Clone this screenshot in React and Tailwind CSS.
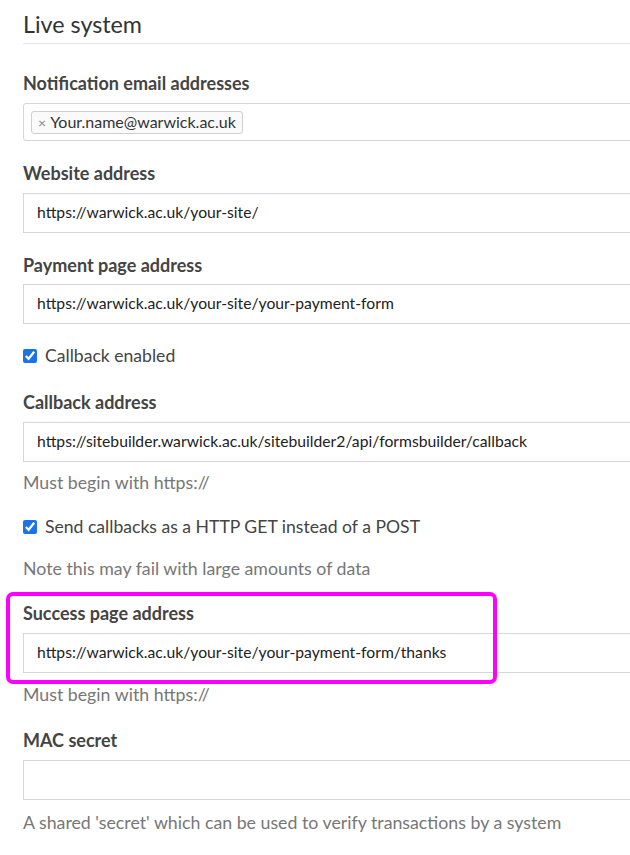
import React from 'react'

const Label = ({ children, className = '' }) => (
  <div className={`text-[18px] leading-[24px] font-bold text-[#444] ${className}`}>{children}</div>
)

const TextBox = ({ value, className = '' }) => (
  <div className={`h-[40px] w-[760px] border border-[#d6d6d6] bg-white flex items-center pl-[13px] text-[15.7px] text-[#222] ${className}`}>
    {value}
  </div>
)

const Help = ({ children, className = '' }) => (
  <div className={`text-[17.75px] leading-[24px] text-[#777] ${className}`}>{children}</div>
)

const Check = ({ children, className = '' }) => (
  <label className={`flex items-center h-[24px] text-[17.6px] text-[#444] ${className}`}>
    <input type="checkbox" checked readOnly className="w-[14px] h-[14px] m-0 mr-[8px] accent-[#1a73e8]" />
    {children}
  </label>
)

export default function App() {
  return (
    <div className="relative w-[630px] h-[855px] overflow-hidden bg-white font-['Lato','Liberation_Sans',sans-serif]">
      <div className="pl-[23px] w-[800px]">
        <div className="h-[44px] pt-[10px] border-b border-[#e6e6e6] w-[607px]">
          <h1 className="text-[23.3px] leading-[28px] text-[#333] font-normal">Live system</h1>
        </div>

        <Label className="mt-[27px] mb-[8px]">Notification email addresses</Label>
        <div className="h-[38px] w-[760px] border border-[#d6d6d6] rounded-[3px] flex items-center pl-[7px]">
          <span className="h-[23px] flex items-center border border-[#cfcfcf] rounded-[3px] bg-[#fafafa] px-[6px] text-[16px] text-[#333]">
            <span className="text-[#888] text-[14px] mr-[4px]">×</span>Your.name@warwick.ac.uk
          </span>
        </div>

        <Label className="mt-[20px] mb-[8px]">Website address</Label>
        <TextBox value="https://warwick.ac.uk/your-site/" />

        <Label className="mt-[20px] mb-[7px]">Payment page address</Label>
        <TextBox value="https://warwick.ac.uk/your-site/your-payment-form" />

        <Check className="mt-[20px]">Callback enabled</Check>

        <Label className="mt-[22px] mb-[8px]">Callback address</Label>
        <TextBox value="https://sitebuilder.warwick.ac.uk/sitebuilder2/api/formsbuilder/callback" />
        <Help className="mt-[8px]">Must begin with https://</Help>

        <Check className="mt-[21px]">Send callbacks as a HTTP GET instead of a POST</Check>
        <Help className="mt-[17px]">Note this may fail with large amounts of data</Help>

        <Label className="mt-[21px] mb-[8px]">Success page address</Label>
        <TextBox value="https://warwick.ac.uk/your-site/your-payment-form/thanks" />
        <Help className="mt-[9px]">Must begin with https://</Help>

        <Label className="mt-[22px] mb-[8px]">MAC secret</Label>
        <TextBox value="" />
        <Help className="mt-[10px]">A shared 'secret' which can be used to verify transactions by a system</Help>
      </div>

      <div className="absolute left-[6px] top-[592px] w-[491px] h-[92px] border-[4px] border-[#ff00ff] rounded-[7px] pointer-events-none" />
    </div>
  )
}
